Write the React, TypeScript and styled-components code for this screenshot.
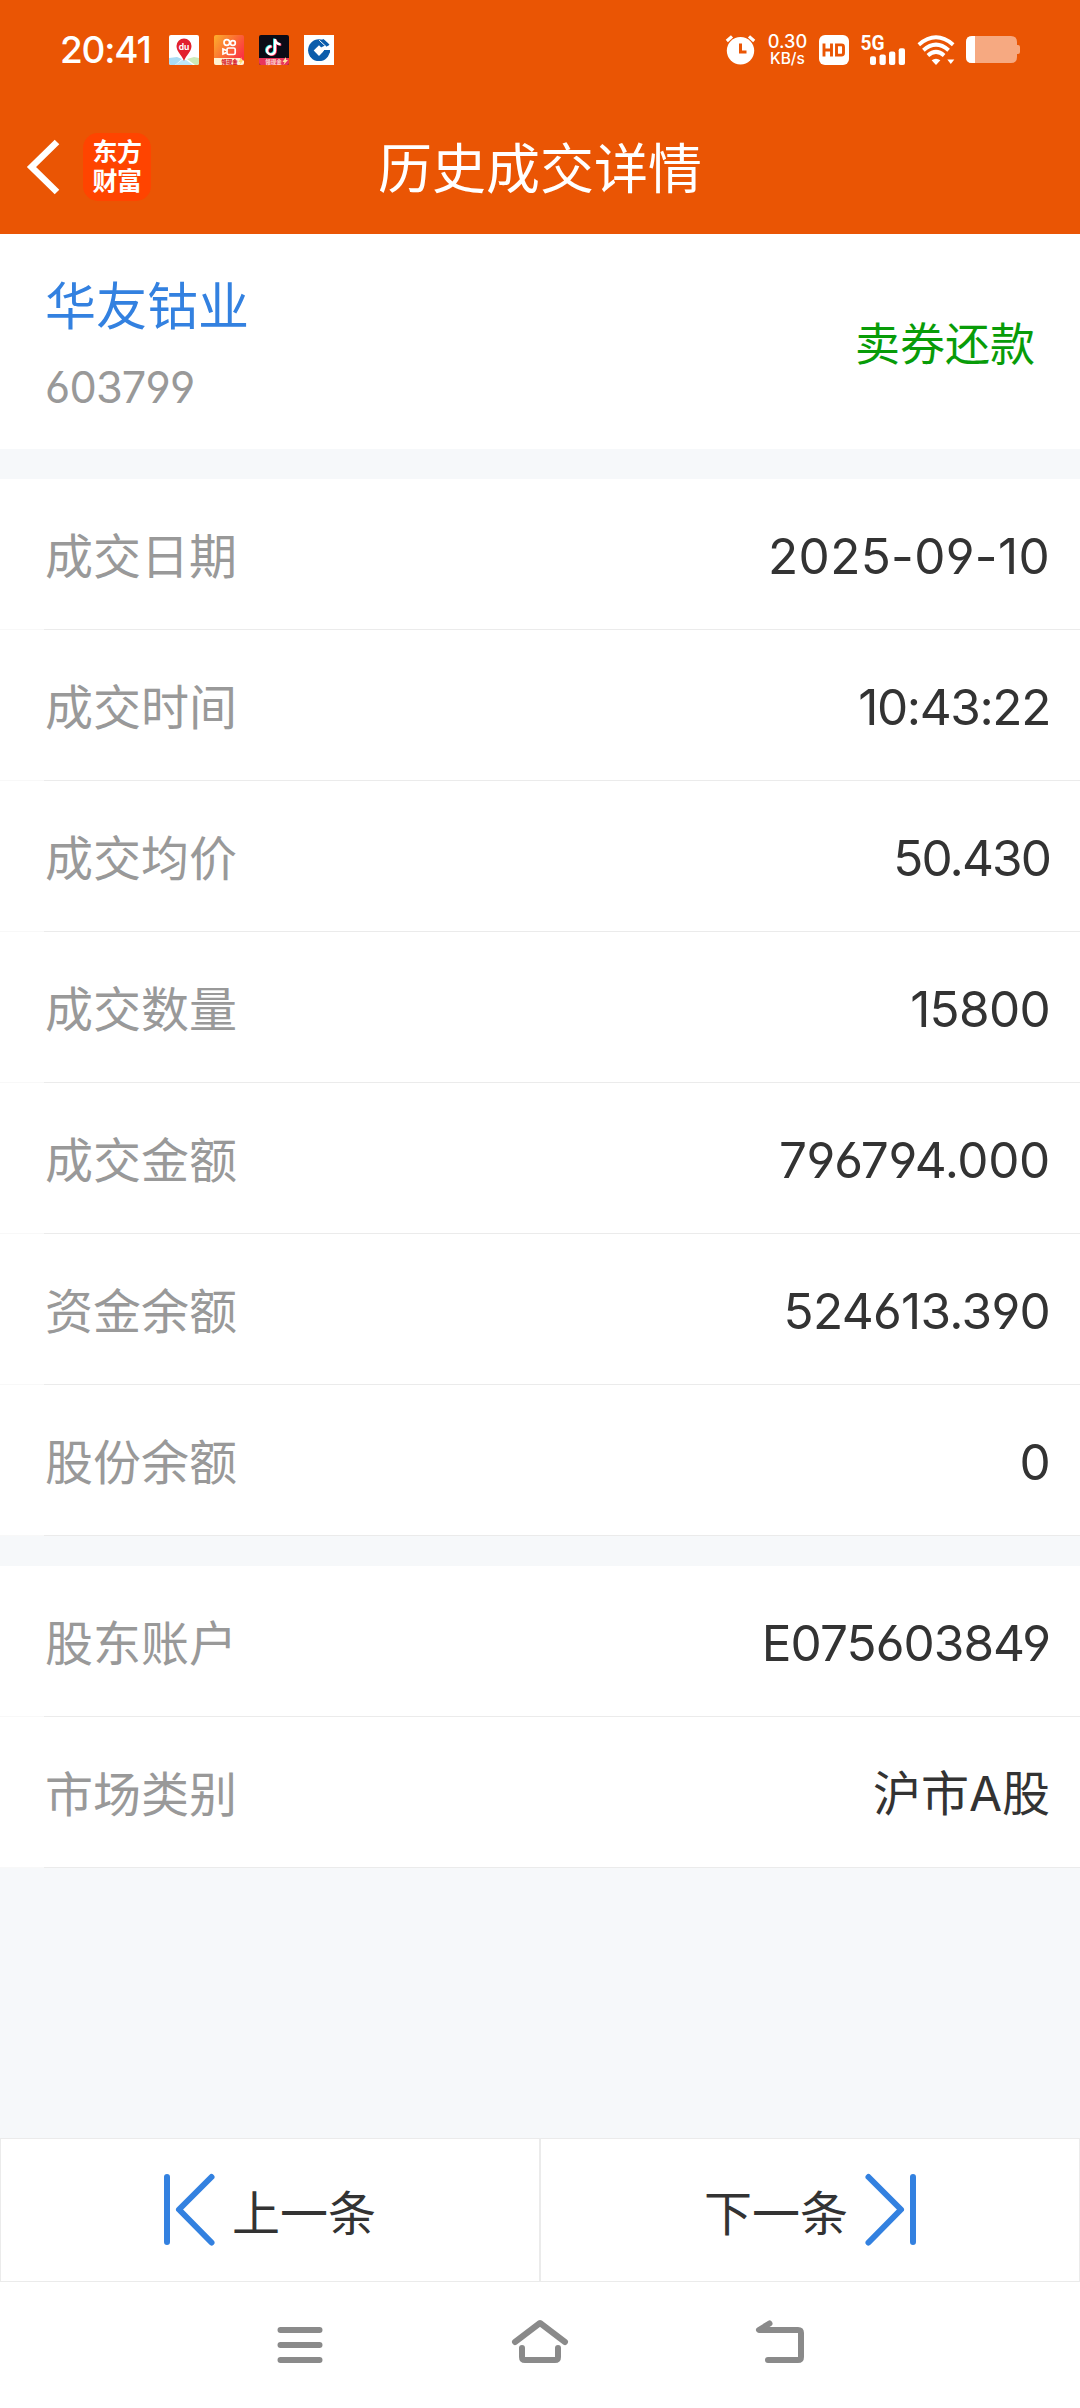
import React from 'react';
import styled, { createGlobalStyle } from 'styled-components';

const Global = createGlobalStyle`
  * { box-sizing: border-box; }
  body { margin: 0; background: #fff; }
`;

const latin = `Inter, 'Noto Sans CJK SC', sans-serif`;
const cjk = `'Noto Sans CJK SC', sans-serif`;

const Screen = styled.div`
  width: 1080px;
  height: 2408px;
  display: flex;
  flex-direction: column;
  overflow: hidden;
  background: #f6f8fa;
  color: #333;
  font-family: ${latin};
  font-feature-settings: 'cv03', 'cv04';
`;

const Top = styled.header`
  height: 234px;
  flex: none;
  background: #ea5504;
  color: #fff;
`;

const StatusBar = styled.div`
  height: 99px;
  padding: 0 60px;
  display: flex;
  align-items: center;
  justify-content: space-between;
`;

const StatusGroup = styled.div`
  display: flex;
  align-items: center;
`;

const Clock = styled.div`
  width: 109px;
  font-size: 37px;
  font-weight: 450;
  line-height: 40px;
  letter-spacing: -1.2px;
  white-space: nowrap;
`;

const AppIcons = styled.div`
  display: flex;
  gap: 15px;
`;

const Icon = styled.svg<{ $ml?: number }>`
  display: block;
  flex: none;
  overflow: visible;
  margin-left: ${(p) => p.$ml ?? 0}px;
`;

const Speed = styled.div`
  width: 38px;
  margin-left: 12.5px;
  padding-top: 2px;
  display: flex;
  flex-direction: column;
  align-items: center;
  white-space: nowrap;
`;

const SpeedLine = styled.span<{ $size: number; $height: number }>`
  font-size: ${(p) => p.$size}px;
  line-height: ${(p) => p.$height}px;
  font-weight: 450;
`;

const TitleBar = styled.div`
  height: 135px;
  display: grid;
  grid-template-columns: 200px 1fr 200px;
  align-items: center;
`;

const TitleLeft = styled.div`
  display: flex;
  align-items: center;
  padding-left: 26px;
`;

const Brand = styled.div`
  width: 68px;
  height: 68px;
  margin-left: 23px;
  padding-bottom: 4px;
  border-radius: 15px;
  background: #ff4400;
  display: flex;
  flex-direction: column;
  align-items: center;
  justify-content: center;
  font: 700 25px/29px ${cjk};
  letter-spacing: -0.5px;
`;

const Title = styled.h1`
  margin: 0;
  padding-bottom: 1px;
  text-align: center;
  font: 400 54px/80px ${cjk};
`;

const Stock = styled.section`
  height: 215px;
  flex: none;
  padding: 0 45px;
  display: flex;
  align-items: center;
  justify-content: space-between;
  background: #fff;
`;

const StockHead = styled.div`
  padding-top: 6px;
`;

const StockName = styled.div`
  font: 400 51px/76px ${cjk};
  color: #3381e0;
`;

const StockCode = styled.div`
  margin-top: 8px;
  font-size: 43.300px;
  line-height: 76px;
  letter-spacing: -0.8px;
  color: #999;
`;

const TradeType = styled.div`
  font: 400 45px/66px ${cjk};
  color: #089c08;
`;

const Card = styled.section`
  flex: none;
  margin-top: 30px;
  background: #fff;
`;

const Row = styled.div`
  height: 151px;
  padding: 0 30px 0 45px;
  display: flex;
  align-items: center;
  justify-content: space-between;
  border-bottom: 1px solid;
  border-image: linear-gradient(90deg, #f8f8f8 45px, #ebebeb 45px) 1;
`;

const Label = styled.span`
  padding-bottom: 3px;
  font: 400 48px/70px ${cjk};
  color: #999;
`;

const Value = styled.span<{ $track: number; $size: number }>`
  padding-top: 4px;
  font-size: ${(p) => p.$size}px;
  line-height: 70px;
  letter-spacing: ${(p) => p.$track}px;
  white-space: nowrap;
`;

const Spacer = styled.div`
  flex: 1;
`;

const Pager = styled.div`
  height: 144px;
  flex: none;
  display: grid;
  grid-template-columns: 1fr 1fr;
  background: #fff;
`;

const PagerButton = styled.button`
  display: flex;
  align-items: center;
  justify-content: center;
  gap: 17px;
  padding: 0 0 1px;
  border: 1px solid #ebebeb;
  border-radius: 0;
  background: #fff;
  color: #333;
  font: 400 48px/70px ${cjk};
`;

const NavBar = styled.nav`
  height: 126px;
  flex: none;
  display: flex;
  justify-content: center;
  gap: 180px;
  padding-top: 33px;
  background: #fff;
`;

type Field = { label: string; value: string; track?: number; size?: number };

const tradeRows: Field[] = [
  { label: '成交日期', value: '2025-09-10', track: 0.33 },
  { label: '成交时间', value: '10:43:22', track: -1.37 },
  { label: '成交均价', value: '50.430', track: -1.9 },
  { label: '成交数量', value: '15800' },
  { label: '成交金额', value: '796794.000', track: -0.35 },
  { label: '资金余额', value: '524613.390' },
  { label: '股份余额', value: '0' },
];

const accountRows: Field[] = [
  { label: '股东账户', value: 'E075603849', track: -0.95 },
  { label: '市场类别', value: '沪市A股', track: 0, size: 48 },
];

const Rows = ({ items }: { items: Field[] }) => (
  <Card>
    {items.map(({ label, value, track = -0.7, size = 49.5 }) => (
      <Row key={label}>
        <Label>{label}</Label>
        <Value $track={track} $size={size}>{value}</Value>
      </Row>
    ))}
  </Card>
);

const MapIcon = () => (
  <Icon width="30" height="30" viewBox="0 0 30 30">
    <rect width="30" height="30" rx="2" fill="#fff" />
    <path d="M0 23l8-1 5 2-7 6H2a2 2 0 0 1-2-2z" fill="#a9dcf5" />
    <path d="M13 25h4l7 5H6z" fill="#bfe6f7" />
    <path d="M18 24l7-2 5 1v5a2 2 0 0 1-2 2h-2z" fill="#cdebb8" />
    <path d="M15 26C13 20 7.500 17 7.500 11a7.500 7.500 0 0 1 15 0c0 6-5.500 9-7.500 15z" fill="#e2212d" />
    <text x="15" y="14.500" fontSize="8.500" fontWeight="700" textAnchor="middle" fill="#fff" fontFamily="Inter, sans-serif">du</text>
  </Icon>
);

const VideoIcon = () => (
  <Icon width="30" height="30" viewBox="0 0 30 30">
    <defs>
      <linearGradient id="ks" x1="0" y1="0" x2="1" y2="0.700">
        <stop offset="0" stopColor="#fdb02c" />
        <stop offset="0.550" stopColor="#fb6a34" />
        <stop offset="1" stopColor="#fb2f46" />
      </linearGradient>
    </defs>
    <rect width="30" height="30" rx="2" fill="url(#ks)" />
    <g fill="none" stroke="#fff" strokeWidth="1.700">
      <circle cx="12.800" cy="7.500" r="2.800" />
      <circle cx="18.900" cy="8" r="2.400" />
      <rect x="13" y="13" width="8.200" height="6.500" rx="1.500" />
      <path d="M12.500 15.500L9 14v5l3.500-1.500" />
    </g>
    <path d="M0 23h26l4 3v2a2 2 0 0 1-2 2H2a2 2 0 0 1-2-2z" fill="#fff2d2" />
    <text x="15.500" y="28.600" fontSize="5.500" fontWeight="900" textAnchor="middle" fill="#d8222f" fontFamily="'Noto Sans CJK SC', sans-serif">领现金</text>
    <path d="M27.500 22l-3 5h2l-1 3 4-5h-2z" fill="#ffd66b" />
  </Icon>
);

const note = 'M16 4v11.500a4 4 0 1 1-3.500-4M16 4.500c.5 3 2.500 4.500 5.500 4.800';
const MusicIcon = () => (
  <Icon width="30" height="30" viewBox="0 0 30 30">
    <rect width="30" height="30" rx="2" fill="#0b0b16" />
    <g fill="none" strokeWidth="2.300">
      <path d={note} stroke="#25e8e4" transform="translate(-.8 -.5)" />
      <path d={note} stroke="#fb2b55" transform="translate(.8 .5)" />
      <path d={note} stroke="#fff" />
    </g>
    <path d="M0 23h30v5a2 2 0 0 1-2 2H2a2 2 0 0 1-2-2z" fill="#e8365c" />
    <text x="14.500" y="28.600" fontSize="5.500" fontWeight="700" textAnchor="middle" fill="#ffe3d6" fontFamily="'Noto Sans CJK SC', sans-serif">领现金</text>
    <path d="M27 22l-3.500 5h2l-1 3 4.500-5h-2z" fill="#ffe3a0" />
  </Icon>
);

const BankIcon = () => (
  <Icon width="30" height="30" viewBox="0 0 30 30">
    <rect width="30" height="30" fill="#fff" />
    <circle cx="15" cy="15.200" r="10.900" fill="#0b5cab" />
    <path d="M17 12.500l3-1.500 8-1v5h-9z" fill="#fff" />
    <path d="M19.500 4l6 5.500-3 2.300-6.500-6z" fill="#0b5cab" />
    <path d="M15 10.300l5.300 5.300-5.300 5.300-5.300-5.300z" fill="#fff" />
    <path d="M15.200 5.200l7 6.500" stroke="#fff" strokeWidth="1" />
    <path d="M20.300 15h5.600v2.800h-7z" fill="#0b5cab" />
  </Icon>
);

const AlarmIcon = () => (
  <Icon width="30" height="30" viewBox="0 0 30 30">
    <circle cx="14.500" cy="15.700" r="13.700" fill="#fff" />
    <path d="M.8 6L6 1.400M28.200 6L23 1.400" stroke="#fff" strokeWidth="3.200" />
    <path d="M14.500 8.500v8.600h6" fill="none" stroke="#ea5504" strokeWidth="3" />
  </Icon>
);

const HdIcon = () => (
  <Icon $ml={12.5} width="30" height="30" viewBox="0 0 30 30">
    <rect width="30" height="30" rx="6" fill="#fff" />
    <path d="M5 8.500v13M12.500 8.500v13M5 15h7.500M17.500 9.900h5q2 0 2 2v6.200q0 2-2 2h-5z" fill="none" stroke="#ea5504" strokeWidth="2.900" />
  </Icon>
);

const SignalIcon = () => (
  <Icon $ml={11} width="46" height="30" viewBox="0 0 46 30">
    <text x="0.500" y="14.600" fontSize="20.500" fontWeight="700" textLength="24" lengthAdjust="spacingAndGlyphs" fill="#fff" fontFamily="Roboto, sans-serif">5G</text>
    <g fill="#fff">
      <rect x="10" y="21.300" width="6" height="8.700" rx="2" />
      <rect x="19.500" y="19.600" width="6.300" height="10.400" rx="2" />
      <rect x="29" y="16.500" width="6.300" height="13.500" rx="2" />
      <rect x="38.700" y="13.300" width="6.300" height="16.700" rx="2" />
    </g>
  </Icon>
);

const WifiIcon = () => (
  <Icon $ml={11} width="38" height="30" viewBox="0 0 38 30">
    <g fill="none" stroke="#fff" strokeWidth="3.900">
      <path d="M1.800 9.700Q19-5 36.200 9.700" />
      <path d="M6.400 15.200Q19 4 31.600 15.200" />
      <path d="M10.900 20.500Q19 13.300 27.100 20.500" />
    </g>
    <path d="M14.600 25.300q4.400-3.300 8.800 0L19 30z" fill="#fff" />
    <path d="M30.300 24.500h7L33.800 29z" fill="#fff" />
  </Icon>
);

const BatteryIcon = () => (
  <Icon $ml={11} width="54" height="27" viewBox="0 0 54 27">
    <path d="M6 0H45q6 0 6 6v3h1q2 0 2 2v5q0 2-2 2h-1v3q0 6-6 6H6q-6 0-6-6V6q0-6 6-6z" fill="#f6a981" />
    <path d="M9 0H6Q0 0 0 6v15q0 6 6 6h3z" fill="#fff" />
  </Icon>
);

const BackIcon = () => (
  <Icon width="34" height="56" viewBox="0 0 34 56" fill="none" stroke="#fff" strokeWidth="6.500">
    <path d="M31 3L5.500 28 31 53" />
  </Icon>
);

const PrevIcon = () => (
  <Icon width="51" height="71" viewBox="0 0 51 71" fill="none" stroke="#3381e0" strokeWidth="6" strokeLinecap="round" strokeLinejoin="round">
    <path d="M3 3v65M47.500 3L15 35.500l32.500 33" />
  </Icon>
);

const NextIcon = () => (
  <Icon width="51" height="71" viewBox="0 0 51 71" fill="none" stroke="#3381e0" strokeWidth="6" strokeLinecap="round" strokeLinejoin="round">
    <path d="M48 3v65M3.500 3L36 35.500l-32.500 33" />
  </Icon>
);

const NavIcon = ({ d }: { d: string }) => (
  <Icon width="60" height="60" viewBox="0 0 60 60" fill="none" stroke="#8a8a8a" strokeWidth="6" strokeLinecap="round" strokeLinejoin="round">
    <path d={d} />
  </Icon>
);

export default function App() {
  return (
    <Screen>
      <Global />
      <Top>
        <StatusBar>
          <StatusGroup>
            <Clock>20:41</Clock>
            <AppIcons>
              <MapIcon />
              <VideoIcon />
              <MusicIcon />
              <BankIcon />
            </AppIcons>
          </StatusGroup>
          <StatusGroup>
            <AlarmIcon />
            <Speed>
              <SpeedLine $size={18.2} $height={15}>0.30</SpeedLine>
              <SpeedLine $size={15.5} $height={19}>KB/s</SpeedLine>
            </Speed>
            <HdIcon />
            <SignalIcon />
            <WifiIcon />
            <BatteryIcon />
          </StatusGroup>
        </StatusBar>
        <TitleBar>
          <TitleLeft>
            <BackIcon />
            <Brand>
              <span>东方</span>
              <span>财富</span>
            </Brand>
          </TitleLeft>
          <Title>历史成交详情</Title>
        </TitleBar>
      </Top>
      <Stock>
        <StockHead>
          <StockName>华友钴业</StockName>
          <StockCode>603799</StockCode>
        </StockHead>
        <TradeType>卖券还款</TradeType>
      </Stock>
      <Rows items={tradeRows} />
      <Rows items={accountRows} />
      <Spacer />
      <Pager>
        <PagerButton>
          <PrevIcon />
          上一条
        </PagerButton>
        <PagerButton>
          下一条
          <NextIcon />
        </PagerButton>
      </Pager>
      <NavBar>
        <NavIcon d="M10.500 15h39M10.500 30h39M10.500 45h39" />
        <NavIcon d="M5 27L30 8l25 19M12 33v9q0 3 3 3h30q3 0 3-3v-9" />
        <NavIcon d="M19.500 8.500L9 15h39q3 0 3 3v24q0 3-3 3H18" />
      </NavBar>
    </Screen>
  );
}
